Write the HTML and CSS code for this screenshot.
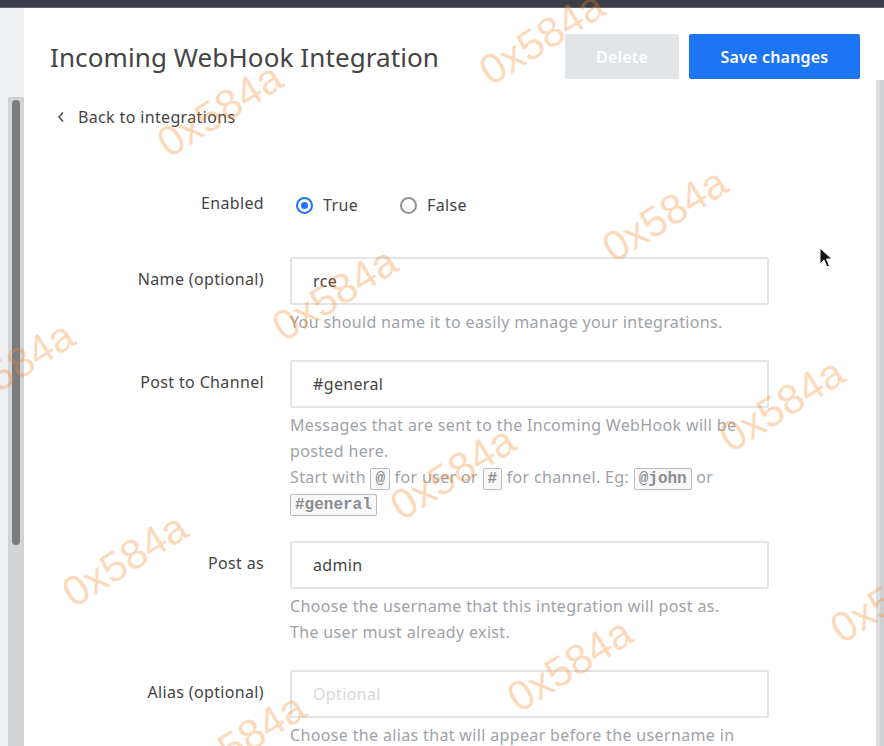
FILE: index.html
```html
<!DOCTYPE html>
<html lang="en">
<head>
    <meta charset="UTF-8" />
    <meta name="viewport" content="width=device-width, initial-scale=1.0" />
    <title>Incoming WebHook Integration</title>
    <link rel="stylesheet" href="styles.css">
</head>
<body>
<div class="topbar"></div>

<div class="frame">
    <div class="gutter-left">
        <div class="track"><div class="thumb"></div></div>
    </div>

    <main class="page">
        <header class="page-header">
            <h1>Incoming WebHook Integration</h1>
            <div class="header-actions">
                <button class="btn btn-disabled">Delete</button>
                <button class="btn btn-primary">Save changes</button>
            </div>
        </header>

        <a class="back-link" href="#">
            <svg width="8" height="12" viewBox="0 0 8 12"><polyline points="6,1.5 2,6 6,10.5" fill="none" stroke="#444" stroke-width="1.4"/></svg>
            <span>Back to integrations</span>
        </a>

        <form class="form">
            <div class="field field-radio">
                <label class="field-label">Enabled</label>
                <div class="field-control radios">
                    <label class="radio-item"><span class="radio checked"></span>True</label>
                    <label class="radio-item"><span class="radio"></span>False</label>
                </div>
            </div>

            <div class="field">
                <label class="field-label">Name (optional)</label>
                <div class="field-control">
                    <div class="input">rce</div>
                    <div class="hint">You should name it to easily manage your integrations.</div>
                </div>
            </div>

            <div class="field">
                <label class="field-label">Post to Channel</label>
                <div class="field-control">
                    <div class="input">#general</div>
                    <div class="hint">Messages that are sent to the Incoming WebHook will be posted here.</div>
                    <div class="hint">Start with <code>@</code> for user or <code>#</code> for channel. Eg: <code>@john</code> or <code>#general</code></div>
                </div>
            </div>

            <div class="field">
                <label class="field-label">Post as</label>
                <div class="field-control">
                    <div class="input">admin</div>
                    <div class="hint">Choose the username that this integration will post as.</div>
                    <div class="hint">The user must already exist.</div>
                </div>
            </div>

            <div class="field">
                <label class="field-label">Alias (optional)</label>
                <div class="field-control">
                    <div class="input placeholder">Optional</div>
                    <div class="hint">Choose the alias that will appear before the username in messages.</div>
                </div>
            </div>
        </form>
    </main>

    <div class="gutter-right">
        <div class="track-right"></div>
    </div>
</div>

<!-- watermark overlay -->
<div class="watermarks">
    <span class="wm wm-1">0x584a</span>
    <span class="wm wm-2">0x584a</span>
    <span class="wm wm-3">0x584a</span>
    <span class="wm wm-4">0x584a</span>
    <span class="wm wm-5">0x584a</span>
    <span class="wm wm-6">0x584a</span>
    <span class="wm wm-7">0x584a</span>
    <span class="wm wm-8">0x584a</span>
    <span class="wm wm-9">0x584a</span>
    <span class="wm wm-10">0x584a</span>
    <span class="wm wm-11">0x584a</span>
</div>

<svg class="cursor" width="14" height="22" viewBox="0 0 14 22">
    <path d="M1 1 L1 17 L5 13 L8 20 L10.5 19 L7.5 12 L13 12 Z" fill="#111" stroke="#fff" stroke-width="1"/>
</svg>
</body>
</html>
```

FILE: styles.css
```css
:root {
    --blue: #1d74f5;
    --text: #444;
    --hint: #9ea2a8;
    --border: #e1e5e8;
}

* {
    box-sizing: border-box;
    margin: 0;
    padding: 0;
}

body {
    width: 884px;
    height: 746px;
    overflow: hidden;
    position: relative;
    font-family: "Noto Sans", "Open Sans", sans-serif;
    letter-spacing: 0.35px;
    color: var(--text);
    background: #fff;
}

.topbar {
    height: 8px;
    background: #3b3e46;
    border-bottom: 1px solid #60636b;
}

.frame {
    display: flex;
    height: 738px;
}

.gutter-left {
    width: 24px;
    background: #eeeff1;
    padding-top: 89px;
    padding-left: 8px;
}

.track {
    width: 16px;
    height: 660px;
    background: #d2d3d5;
    padding: 3px 4px;
}

.thumb {
    width: 8px;
    height: 445px;
    background: #7b7c7e;
    border-radius: 4px;
}

.gutter-right {
    width: 8px;
    padding-top: 72px;
}

.track-right {
    height: 100%;
    background: #cfd0d2;
    border-left: 4px solid #dcdddf;
}

.page {
    flex: 1;
    padding: 26px 16px 0 26px;
}

.page-header {
    display: flex;
    align-items: center;
    justify-content: space-between;
    height: 45px;
}

h1 {
    font-size: 26px;
    font-weight: 400;
    color: var(--text);
    letter-spacing: 0.1px;
}

.header-actions {
    display: flex;
    gap: 10px;
}

.btn {
    height: 45px;
    border: none;
    border-radius: 2px;
    font-family: inherit;
    font-size: 16px;
    font-weight: 600;
    letter-spacing: 0.2px;
    color: #fff;
}

.btn-disabled {
    width: 114px;
    background: #e1e5e8;
}

.btn-primary {
    width: 171px;
    background: var(--blue);
}

.back-link {
    display: flex;
    align-items: center;
    gap: 13px;
    margin: 27px 0 0 7px;
    height: 22px;
    font-size: 16px;
    color: var(--text);
    text-decoration: none;
}

.form {
    margin-top: 64px;
}

.field {
    display: grid;
    grid-template-columns: 214px 479px;
    column-gap: 26px;
    margin-bottom: 25px;
}

.field-radio {
    margin-bottom: 41px;
}

.field-label {
    text-align: right;
    font-size: 16px;
    line-height: 22px;
    padding-top: 11px;
}

.field-radio .field-label {
    padding-top: 0;
}

.radios {
    display: flex;
    align-items: center;
    gap: 42px;
    height: 24px;
    padding-left: 6px;
    font-size: 16px;
}

.radio-item {
    display: flex;
    align-items: center;
    gap: 10px;
    padding-top: 2px;
}

.radio {
    width: 17px;
    height: 17px;
    border: 2px solid #8e9196;
    border-radius: 50%;
    display: flex;
    align-items: center;
    justify-content: center;
}

.radio.checked {
    border-color: var(--blue);
}

.radio.checked::after {
    content: "";
    width: 7px;
    height: 7px;
    border-radius: 50%;
    background: var(--blue);
}

.input {
    height: 48px;
    border: 2px solid var(--border);
    border-radius: 2px;
    padding: 0 21px;
    display: flex;
    align-items: center;
    font-size: 16px;
    color: var(--text);
}

.input.placeholder {
    color: #d4d7da;
}

.hint {
    font-size: 16px;
    line-height: 26px;
    color: var(--hint);
}

.input + .hint {
    margin-top: 4px;
}

code {
    font-family: "Liberation Mono", "DejaVu Sans Mono", monospace;
    font-size: 16px;
    line-height: 1;
    font-weight: bold;
    letter-spacing: 0;
    color: #8a8d91;
    background: #f8f8f8;
    border: 1px solid #b9bcc0;
    border-radius: 2px;
    padding: 1px 4px;
}

.watermarks {
    position: absolute;
    inset: 0;
    pointer-events: none;
}

.wm {
    position: absolute;
    transform: translate(-50%, -50%) rotate(-32deg);
    font-family: "Liberation Sans", sans-serif;
    font-size: 42px;
    line-height: 1;
    letter-spacing: 0;
    color: rgba(250, 135, 40, 0.33);
    white-space: nowrap;
}

.wm-1 { left: 542px; top: 38px; }
.wm-2 { left: 220px; top: 110px; }
.wm-3 { left: 665px; top: 215px; }
.wm-4 { left: 335px; top: 294px; }
.wm-5 { left: 12px; top: 368px; }
.wm-6 { left: 782px; top: 405px; }
.wm-7 { left: 453px; top: 473px; }
.wm-8 { left: 125px; top: 560px; }
.wm-9 { left: 893px; top: 596px; }
.wm-10 { left: 570px; top: 665px; }
.wm-11 { left: 243px; top: 740px; }

.cursor {
    position: absolute;
    left: 819px;
    top: 247px;
}
```
